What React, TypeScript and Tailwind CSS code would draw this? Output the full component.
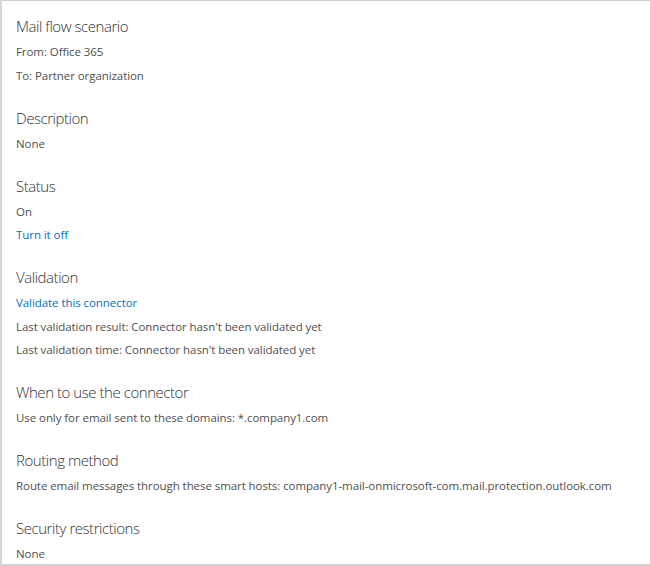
import React from 'react';

type Line = { text: string; link?: boolean };
type Section = { title: string; lines: Line[] };

const sections: Section[] = [
  {
    title: 'Mail flow scenario',
    lines: [{ text: 'From: Office 365' }, { text: 'To: Partner organization' }],
  },
  { title: 'Description', lines: [{ text: 'None' }] },
  { title: 'Status', lines: [{ text: 'On' }, { text: 'Turn it off', link: true }] },
  {
    title: 'Validation',
    lines: [
      { text: 'Validate this connector', link: true },
      { text: "Last validation result: Connector hasn't been validated yet" },
      { text: "Last validation time: Connector hasn't been validated yet" },
    ],
  },
  {
    title: 'When to use the connector',
    lines: [{ text: 'Use only for email sent to these domains: *.company1.com' }],
  },
  {
    title: 'Routing method',
    lines: [
      {
        text: 'Route email messages through these smart hosts: company1-mail-onmicrosoft-com.mail.protection.outlook.com',
      },
    ],
  },
  { title: 'Security restrictions', lines: [{ text: 'None' }] },
];

const App: React.FC = () => {
  return (
    <div className="w-[650px] h-[566px] bg-white overflow-hidden">
      <div className="h-full border-t border-l-2 border-b-2 border-t-[#c9d0d5] border-l-[#d4d8db] border-b-[#d2d2d2] font-['Open_Sans',sans-serif] pl-[14px] pt-[13px] flex flex-col gap-[18.5px]">
        {sections.map((s) => (
          <div key={s.title} className="flex flex-col">
            <h2 className="text-[15px] font-light leading-[24px] tracking-[-0.45px] text-[#333] mb-[2px]">{s.title}</h2>
            {s.lines.map((l) => (
              <div
                key={l.text}
                className={`text-[11.5px] leading-[23.5px] tracking-[-0.07px] whitespace-nowrap ${l.link ? 'text-[#0072c6]' : 'text-[#505050]'}`}
              >
                {l.text}
              </div>
            ))}
          </div>
        ))}
      </div>
    </div>
  );
};

export default App;
